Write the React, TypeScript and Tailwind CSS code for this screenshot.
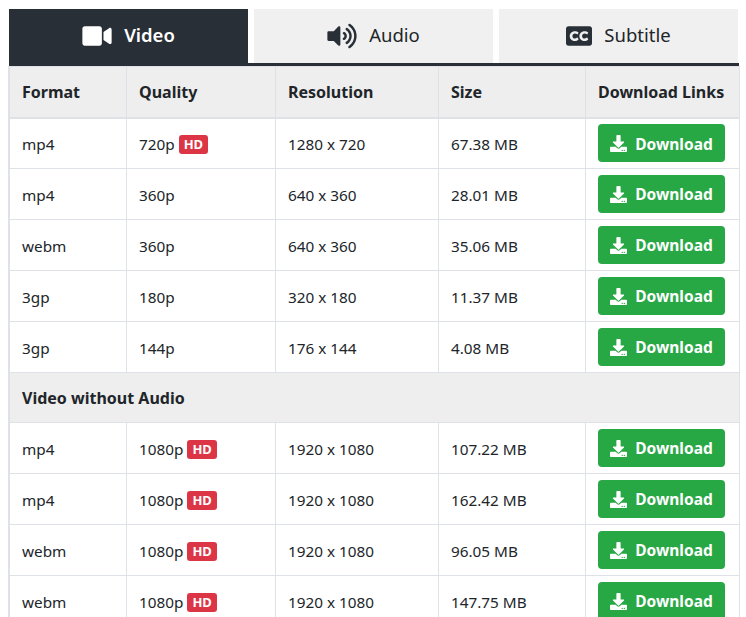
import { FaClosedCaptioning, FaDownload, FaVideo, FaVolumeUp } from "react-icons/fa";

interface Row {
    format: string;
    quality: string;
    hd?: boolean;
    resolution: string;
    size: string;
}

const videoRows: Row[] = [
    { format: "mp4", quality: "720p", hd: true, resolution: "1280 x 720", size: "67.38 MB" },
    { format: "mp4", quality: "360p", resolution: "640 x 360", size: "28.01 MB" },
    { format: "webm", quality: "360p", resolution: "640 x 360", size: "35.06 MB" },
    { format: "3gp", quality: "180p", resolution: "320 x 180", size: "11.37 MB" },
    { format: "3gp", quality: "144p", resolution: "176 x 144", size: "4.08 MB" },
];

const noAudioRows: Row[] = [
    { format: "mp4", quality: "1080p", hd: true, resolution: "1920 x 1080", size: "107.22 MB" },
    { format: "mp4", quality: "1080p", hd: true, resolution: "1920 x 1080", size: "162.42 MB" },
    { format: "webm", quality: "1080p", hd: true, resolution: "1920 x 1080", size: "96.05 MB" },
    { format: "webm", quality: "1080p", hd: true, resolution: "1920 x 1080", size: "147.75 MB" },
];

const cell = "border border-[#dee2e6] px-3 align-middle";
const textCell = "border border-[#dee2e6] px-3 pt-[2px] align-middle";

const Badge = ({ show }: { show?: boolean }) =>
    show ? (
        <span className="ml-[4px] inline-block rounded-[3px] bg-[#dc3545] px-[5px] py-[3px] align-[1px] text-[13px] leading-[13px] font-bold text-white">
            HD
        </span>
    ) : null;

const TableRow = ({ row }: { row: Row }) => (
    <tr className="h-[51px]">
        <td className={textCell}>{row.format}</td>
        <td className={textCell}>
            {row.quality}
            <Badge show={row.hd} />
        </td>
        <td className={textCell}>{row.resolution}</td>
        <td className={textCell}>{row.size}</td>
        <td className={cell}>
            <a className="flex h-[38px] w-[127px] items-center justify-center gap-[8px] rounded bg-[#28a745] text-[15.5px] font-bold text-white">
                <FaDownload className="h-[17px] w-[17px]" />
                <span className="pt-[2px]">Download</span>
            </a>
        </td>
    </tr>
);

export default function App() {
    return (
        <div className="h-[617px] w-[746px] overflow-hidden bg-white pt-[9px] pl-[9px] font-['Noto_Sans',sans-serif] text-[15.3px] text-[#212529]">
            <div className="flex w-[730px] gap-[6px] border-b-[3px] border-[#292f37]">
                <div className="flex h-[54px] w-[239px] items-center justify-center gap-3 bg-[#292f37] text-[18.5px] font-semibold text-white">
                    <FaVideo className="h-[26px] w-[30px]" />
                    <span className="mb-[2px]">Video</span>
                </div>
                <div className="flex h-[54px] w-[239px] items-center justify-center gap-3 bg-[#f0f0f0] text-[18.5px]">
                    <FaVolumeUp className="h-[26px] w-[30px] text-[#292f37]" />
                    <span className="mb-[2px]">Audio</span>
                </div>
                <div className="flex h-[54px] w-[239px] items-center justify-center gap-3 bg-[#f0f0f0] text-[18.5px]">
                    <FaClosedCaptioning className="h-[26px] w-[26px] text-[#292f37]" />
                    <span className="mb-[2px]">Subtitle</span>
                </div>
            </div>
            <table className="w-[730px] table-fixed border-collapse shadow-[-1px_0_0_#dee2e6]">
                <colgroup>
                    <col className="w-[117px]" />
                    <col className="w-[149px]" />
                    <col className="w-[163px]" />
                    <col className="w-[147px]" />
                    <col className="w-[154px]" />
                </colgroup>
                <thead>
                    <tr className="h-[51px] bg-[#eeeeee] text-left text-[16px] font-bold">
                        <th className={`${cell} border-b-2`}>Format</th>
                        <th className={`${cell} border-b-2`}>Quality</th>
                        <th className={`${cell} border-b-2`}>Resolution</th>
                        <th className={`${cell} border-b-2`}>Size</th>
                        <th className={`${cell} border-b-2`}>Download Links</th>
                    </tr>
                </thead>
                <tbody>
                    {videoRows.map((row, i) => (
                        <TableRow key={i} row={row} />
                    ))}
                    <tr className="h-[50px] bg-[#eeeeee] text-[16px] font-bold">
                        <td className={cell} colSpan={5}>
                            Video without Audio
                        </td>
                    </tr>
                    {noAudioRows.map((row, i) => (
                        <TableRow key={i} row={row} />
                    ))}
                </tbody>
            </table>
        </div>
    );
}
